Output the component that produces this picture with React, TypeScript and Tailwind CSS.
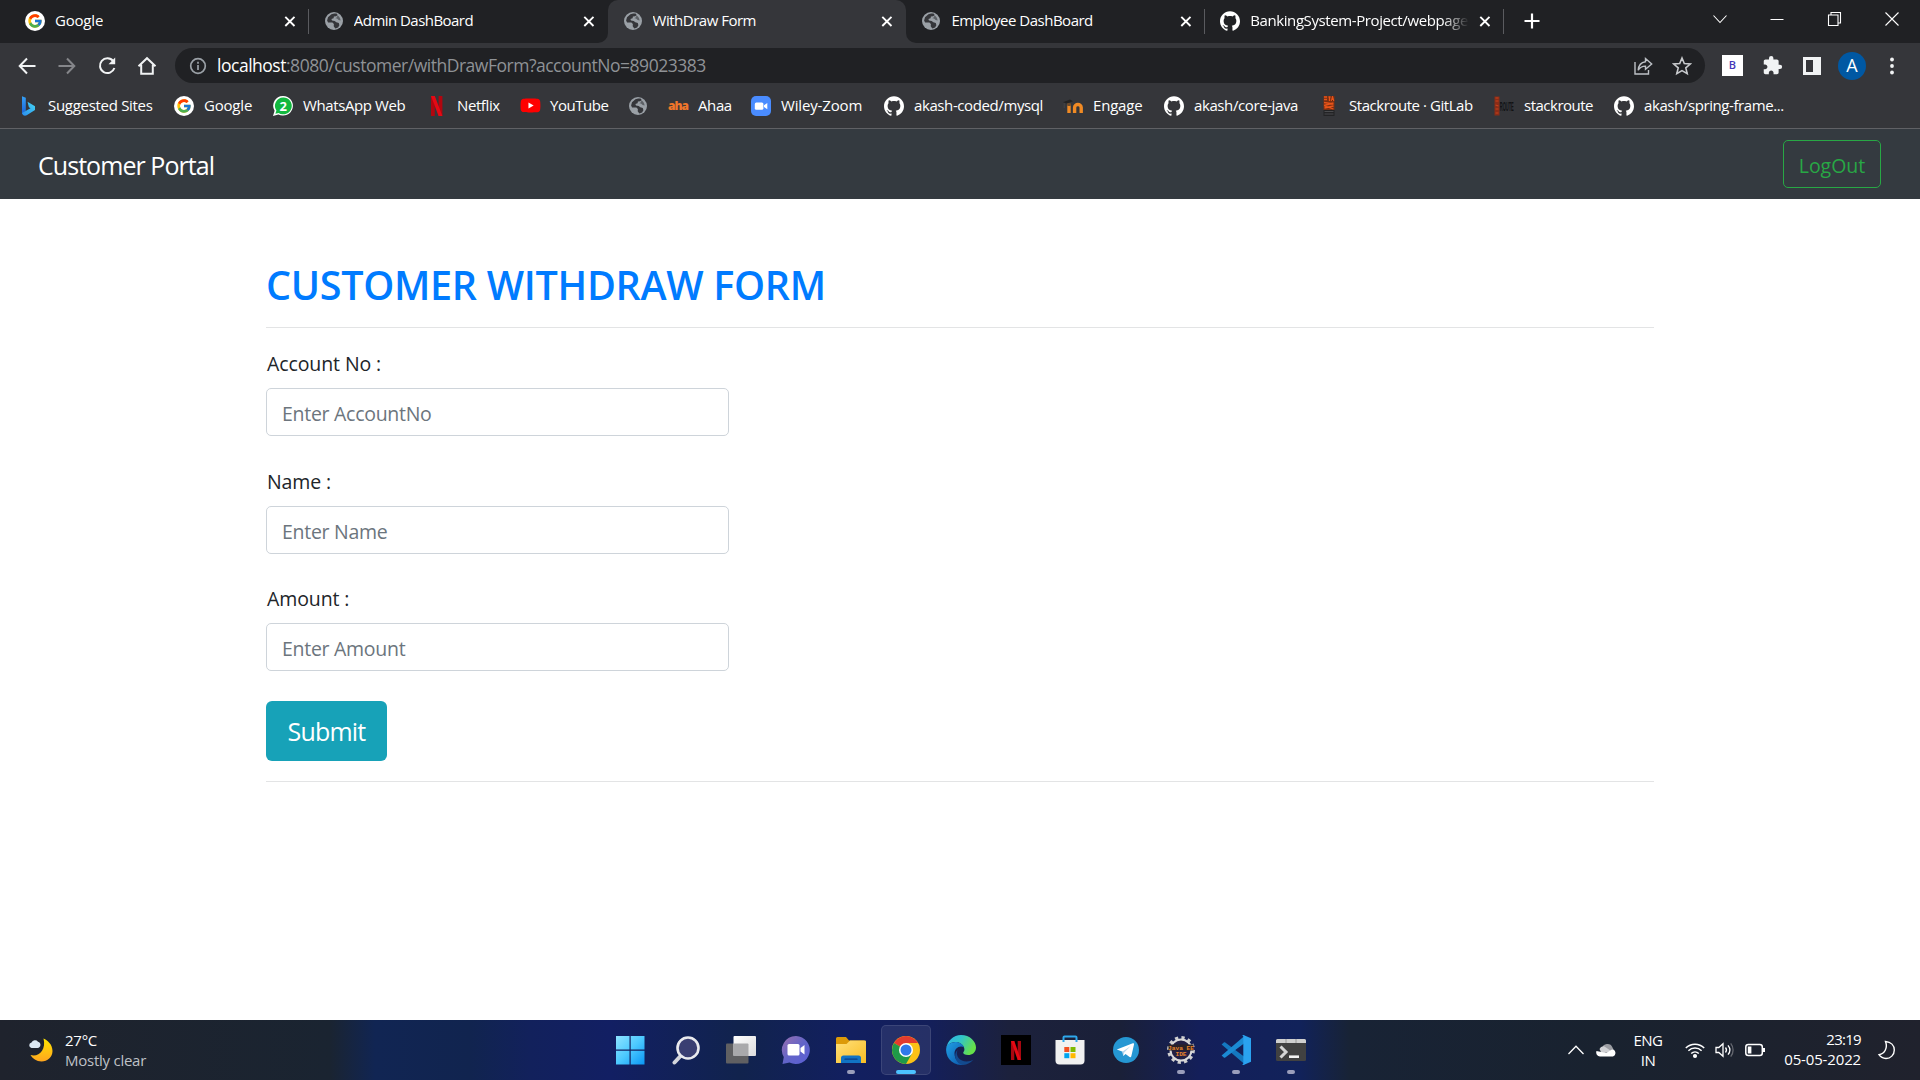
import type { ReactNode } from 'react'
import { FcGoogle } from 'react-icons/fc'
import { SiGithub } from 'react-icons/si'
import { MdExtension } from 'react-icons/md'
import { FaYoutube } from 'react-icons/fa'

function Globe() {
  return (
    <svg viewBox="0 0 20 20" className="size-5 shrink-0">
      <circle cx="10" cy="10" r="9" fill="#9aa0a6" />
      <path d="M10.2 2.6 7.4 3.2 4 6.3l-.9 3.2 1 1.9 4.3.2 1.5 1.3-.2 2.4 1.6 2.1 2.8-.9 1.3-2.2-.6-2.2-2.5-.8-1.6-1.4-2.7-.3-.6-1.5 2.2-.9.3-1.6 2.3-.4 1.5-1.3-1.2-1.5z" fill="#35363a" />
      <path d="M13 4.2c2 .9 3.4 2.8 3.6 5.200l-1.900-.3-1.700-1.500-1.700-.4 1.900-1.200z" fill="#5c6065" />
    </svg>
  )
}

function Google() {
  return (
    <span className="flex size-5 shrink-0 items-center justify-center rounded-full bg-white">
      <FcGoogle className="size-4" />
    </span>
  )
}

function Github() {
  return <SiGithub className="size-5 shrink-0 text-white" />
}

function Bing() {
  return (
    <svg viewBox="0 0 20 20" className="size-5 shrink-0">
      <defs>
        <linearGradient id="bingA" x1="0" y1="0" x2="0" y2="1">
          <stop offset="0" stopColor="#35a0f5" />
          <stop offset="1" stopColor="#1b63d8" />
        </linearGradient>
        <linearGradient id="bingB" x1="0" y1="1" x2="1" y2="0">
          <stop offset="0" stopColor="#2a8cf0" />
          <stop offset="1" stopColor="#45d6f2" />
        </linearGradient>
      </defs>
      <path d="M4 .3 7.800 1.800V15L4 18z" fill="url(#bingA)" />
      <path d="M9.500 5.800 17 10.200v3.800l-8.300 5.300c-2.200 1-4.400-.1-4.700-2.300l8.500-4.800-1.600-1z" fill="url(#bingB)" />
    </svg>
  )
}

function Whatsapp() {
  return (
    <svg viewBox="0 0 20 20" className="size-5 shrink-0">
      <path d="M10.200 0a9.800 9.800 0 1 1-4.800 18.400L0 20l1.600-5.200A9.800 9.800 0 0 1 10.200 0z" fill="#fff" />
      <path d="M10.200 1.500a8.400 8.400 0 1 1-4.500 15.400L2.400 17.800l1-3.200A8.400 8.400 0 0 1 10.200 1.500z" fill="#12b83f" />
      <text x="10.200" y="14.700" fontSize="13" fontWeight="700" fill="#fff" textAnchor="middle" fontFamily="Open Sans, sans-serif">2</text>
    </svg>
  )
}

function NetflixMark() {
  return (
    <svg viewBox="0 0 20 20" className="size-5 shrink-0">
      <path d="M4 0h3.800v20H4zM11.600 0h3.800v20h-3.800z" fill="#b1060f" />
      <path d="M4 0h3.800l7.600 20h-3.800z" fill="#e50914" />
    </svg>
  )
}

function Youtube() {
  return (
    <span className="flex size-5 shrink-0 items-center justify-center bg-[linear-gradient(#fff,#fff)] bg-[length:7px_7px] bg-center bg-no-repeat">
      <FaYoutube className="size-[21px] shrink-0 text-[#ff0000]" />
    </span>
  )
}

function Zoom() {
  return (
    <svg viewBox="0 0 20 20" className="size-5 shrink-0">
      <rect width="20" height="20" rx="5" fill="#4a8cff" />
      <rect x="3.800" y="6.500" width="8.600" height="7.200" rx="1.500" fill="#fff" />
      <path d="M13 9.200 16.300 7v6.200L13 11z" fill="#fff" />
    </svg>
  )
}

function Moodle() {
  return (
    <svg viewBox="0 0 20 20" className="size-5 shrink-0">
      <path d="M0 6.200 7 3.600 10 5.200 4 7.400z" fill="#222" />
      <path d="M1.200 7v5" stroke="#444" strokeWidth="1" />
      <path d="M6 17V8.500M11.600 17v-5.500c0-4 6.600-4 6.600 0V17" stroke="#f08a24" strokeWidth="3.400" fill="none" />
      <path d="M6 10V7" stroke="#6b4a2c" strokeWidth="3.400" />
    </svg>
  )
}

function StackA() {
  return (
    <svg viewBox="0 0 20 20" className="size-5 shrink-0">
      <rect x="4.500" y="0" width="11" height="14" fill="#7a2f12" />
      <path d="M5 1h3M5 3.500h3M9.500 1h2M10.500 1v4M12.500 5l1-4 1.200 4M5 6.500 14.500 8M5 9.500 14.500 7M5.500 12l9-2M5.500 10l9 3" stroke="#e8541a" strokeWidth="1.300" />
      <rect x="4.500" y="14" width="11" height="6" fill="#232325" />
      <path d="M5.500 15.500h9M5.500 18h9" stroke="#4a4b4e" strokeWidth="1" />
    </svg>
  )
}

function StackB() {
  return (
    <svg viewBox="0 0 20 20" className="size-5 shrink-0">
      <rect x="0.500" y="0.500" width="5" height="19" fill="#8a2c17" />
      <path d="M1.500 2h3M1.500 5h3M1.500 9l3 1M1.500 13h3M1.500 17h3" stroke="#c8421c" strokeWidth="1.200" />
      <text x="5.800" y="5" transform="scale(1 3)" fontSize="4" fontWeight="700" fill="#111214" fontFamily="Liberation Sans, sans-serif">ROUTE</text>
    </svg>
  )
}

function Close() {
  return (
    <svg viewBox="0 0 16 16" className="ml-auto size-4 shrink-0" stroke="#fff" strokeWidth="1.900">
      <path d="M3.300 3.800l9.200 9.200M12.500 3.800 3.300 13" />
    </svg>
  )
}

const tabs: { title: string; icon: ReactNode; track: string; active?: boolean; divider?: boolean; fade?: boolean }[] = [
  { title: 'Google', icon: <Google />, track: 'tracking-[-0.2px]', divider: true },
  { title: 'Admin DashBoard', icon: <Globe />, track: 'tracking-[-0.54px]' },
  { title: 'WithDraw Form', icon: <Globe />, track: 'tracking-[-0.5px]', active: true },
  { title: 'Employee DashBoard', icon: <Globe />, track: 'tracking-[-0.5px]', divider: true },
  { title: 'BankingSystem-Project/webpage', icon: <Github />, track: 'tracking-[-0.4px]', divider: true, fade: true },
]

const bookmarks: { label: string; icon: ReactNode; box: string; track: string }[] = [
  { label: 'Suggested Sites', icon: <Bing />, box: 'w-[156px]', track: 'tracking-[-0.3px]' },
  { label: 'Google', icon: <Google />, box: 'w-[99px]', track: 'tracking-[-0.2px]' },
  { label: 'WhatsApp Web', icon: <Whatsapp />, box: 'w-[154px]', track: 'tracking-[-0.4px]' },
  { label: 'Netflix', icon: <NetflixMark />, box: 'w-[93px]', track: 'tracking-[-0.4px]' },
  { label: 'YouTube', icon: <Youtube />, box: 'w-[108px]', track: 'tracking-[-0.45px]' },
  { label: '', icon: <Globe />, box: 'w-[40px]', track: '' },
  {
    label: 'Ahaa',
    icon: <span className="w-5 shrink-0 text-[12px] leading-5 font-extrabold tracking-[-1px] text-[#f0762b]">aha</span>,
    box: 'w-[83px]',
    track: 'tracking-[-0.4px]',
  },
  { label: 'Wiley-Zoom', icon: <Zoom />, box: 'w-[133px]', track: 'tracking-[-0.15px]' },
  { label: 'akash-coded/mysql', icon: <Github />, box: 'w-[179px]', track: 'tracking-[-0.4px]' },
  { label: 'Engage', icon: <Moodle />, box: 'w-[101px]', track: 'tracking-[-0.2px]' },
  { label: 'akash/core-java', icon: <Github />, box: 'w-[155px]', track: 'tracking-[-0.4px]' },
  { label: 'Stackroute · GitLab', icon: <StackA />, box: 'w-[175px]', track: 'tracking-[-0.45px]' },
  { label: 'stackroute', icon: <StackB />, box: 'w-[120px]', track: 'tracking-[-0.5px]' },
  { label: 'akash/spring-frame...', icon: <Github />, box: 'w-[175px]', track: 'tracking-[-0.41px]' },
]

function TabStrip() {
  return (
    <div className="flex h-[43px] bg-[#202124] pl-[10px] text-white">
      {tabs.map((t) => (
        <div
          key={t.title}
          className={`relative flex h-full w-[298.800px] items-center pr-[11px] pb-[1px] pl-[15px] ${t.active ? 'rounded-t-[10px] bg-[#35363a]' : ''}`}
        >
          {t.icon}
          <span
            className={`ml-[10px] overflow-hidden pb-[2px] text-[15px] leading-5 whitespace-nowrap ${t.track} ${t.fade ? 'w-[219px] [mask-image:linear-gradient(to_right,#000_88%,transparent)]' : ''}`}
          >
            {t.title}
          </span>
          <Close />
          {t.divider && <span className="absolute top-[9px] right-0 h-[25px] w-px bg-[#5a5b5f]" />}
          {t.active && (
            <>
              <span className="absolute bottom-0 -left-[10px] size-[10px] bg-[#35363a]">
                <span className="block size-full rounded-br-[10px] bg-[#202124]" />
              </span>
              <span className="absolute -right-[10px] bottom-0 size-[10px] bg-[#35363a]">
                <span className="block size-full rounded-bl-[10px] bg-[#202124]" />
              </span>
            </>
          )}
        </div>
      ))}
      <svg viewBox="0 0 16 16" className="mt-[13px] ml-[20px] size-4" stroke="#fff" strokeWidth="2.200">
        <path d="M8 .5v15M.5 8h15" />
      </svg>
      <div className="mr-[20px] ml-auto flex h-[38px] items-center gap-[41.500px]">
        <svg viewBox="0 0 16 16" className="size-4" fill="none" stroke="#fff" strokeWidth="1.100">
          <path d="M1.500 4.500 8 11.500l6.500-7" />
        </svg>
        <svg viewBox="0 0 16 16" className="size-4" stroke="#fff" strokeWidth="1">
          <path d="M1.500 8.500h13" />
        </svg>
        <svg viewBox="0 0 16 16" className="size-4" fill="none" stroke="#fff" strokeWidth="1.100">
          <path d="M1.500 4h9.500v10.500H1.500zM4 4V1.500h9.500V12H11" />
        </svg>
        <svg viewBox="0 0 16 16" className="size-4" stroke="#fff" strokeWidth="1.100">
          <path d="M1.500 1.500l13 13M14.500 1.500l-13 13" />
        </svg>
      </div>
    </div>
  )
}

function Toolbar() {
  return (
    <div className="flex h-[45px] items-center bg-[#35363a] pl-[17px]">
      <div className="flex items-center gap-5">
        <svg viewBox="0 0 20 20" className="size-5" fill="none" stroke="#f1f3f4" strokeWidth="2">
          <path d="M18.500 10H3M10 2.500 2.700 10l7.300 7.500" />
        </svg>
        <svg viewBox="0 0 20 20" className="size-5" fill="none" stroke="#85868a" strokeWidth="2">
          <path d="M1.500 10H17M10 2.500l7.300 7.500-7.300 7.500" />
        </svg>
        <svg viewBox="0 0 20 20" className="size-5" fill="none" stroke="#f1f3f4" strokeWidth="2">
          <path d="M16.200 5.100A7.400 7.400 0 1 0 17.400 12" />
          <path d="M18.200 1.500v6.700h-6.700z" fill="#f1f3f4" stroke="none" />
        </svg>
        <svg viewBox="0 0 20 20" className="size-5" fill="none" stroke="#f1f3f4" strokeWidth="2">
          <path d="M1.500 10.200 10 2.200l8.500 8M4.200 8.800v9h11.600v-9" />
        </svg>
      </div>
      <div className="ml-[18px] flex h-[35px] w-[1530px] items-center rounded-full bg-[#202124] pr-[13px] pl-[14px]">
        <svg viewBox="0 0 18 18" className="size-[18px]" fill="none" stroke="#9aa0a6" strokeWidth="1.700">
          <circle cx="9" cy="9" r="7.300" />
          <path d="M9 8v5M9 4.800v1.900" />
        </svg>
        <span className="ml-[10px] pb-px text-[17.500px] leading-6 tracking-[-0.48px] text-[#8f9296]">
          <span className="text-white">localhost</span>:8080/customer/withDrawForm?accountNo=89023383
        </span>
        <svg viewBox="0 0 20 20" className="ml-auto size-5" fill="none" stroke="#bdc1c6" strokeWidth="1.400">
          <path d="M2 6v12h13.500v-4" />
          <path d="M12.500 2.500 18.700 8l-6.200 5.300v-3.200c-3.500 0-5.700 1-7.300 4.200.3-4.700 2.600-8 7.300-8.600z" />
        </svg>
        <svg viewBox="0 0 20 20" className="ml-[19px] size-5" fill="none" stroke="#c8cacd" strokeWidth="1.600">
          <path d="m10 2 2.300 5.500 6 .5-4.500 3.900 1.400 5.800L10 14.600l-5.200 3.100 1.400-5.800L1.700 8l6-.5z" />
        </svg>
      </div>
      <span className="ml-[17px] flex size-[21px] items-center justify-center bg-white text-[11px] font-semibold text-[#4338b8]">B</span>
      <MdExtension className="ml-[19px] size-[21px] text-[#f1f3f4]" />
      <svg viewBox="0 0 20 20" className="ml-[19px] size-5">
        <path d="M1 1h18v18H1zM4 4v12h7V4z" fill="#f1f3f4" fillRule="evenodd" />
      </svg>
      <span className="ml-[16px] flex size-[28px] items-center justify-center rounded-full bg-[#0058a3] text-[18px] text-white">A</span>
      <svg viewBox="0 0 20 20" className="ml-[16px] size-5" fill="#f1f3f4">
        <circle cx="10" cy="3.500" r="1.900" />
        <circle cx="10" cy="10" r="1.900" />
        <circle cx="10" cy="16.500" r="1.900" />
      </svg>
    </div>
  )
}

function Field({ label, hint, gap }: { label: string; hint: string; gap: string }) {
  return (
    <div className={gap}>
      <label className="block pl-px text-[19.500px] leading-[30px] tracking-[-0.1px] text-[#212529]">{label}</label>
      <input
        placeholder={hint}
        className="mt-[9px] block h-[48px] w-[463px] rounded-[5px] border border-[#ced4da] px-[15px] pt-[2px] pb-0 text-[19.500px] tracking-[-0.28px] placeholder:text-[#6c757d]"
      />
    </div>
  )
}

function TaskIcon({ children, running }: { children: ReactNode; running?: boolean }) {
  return (
    <div className="relative flex h-[60px] w-[55px] items-center justify-center">
      {children}
      {running && <span className="absolute bottom-[6px] left-1/2 h-1 w-2 -translate-x-1/2 rounded-full bg-[#9a9ebb]" />}
    </div>
  )
}

function Taskbar() {
  return (
    <footer className="flex h-[60px] items-center bg-[linear-gradient(90deg,#1f232d_0px,#1a2431_330px,#112553_375px,#11244f_470px,#12215c_530px,#121f63_610px,#11234d_740px,#121f60_850px,#141f5a_930px,#1c213c_1010px,#1a2038_1120px,#141f5a_1200px,#11225a_1300px,#182335_1350px,#19222f_1600px,#20222d_1920px)] text-[15px] text-white">
      <div className="flex w-[588px] items-center pl-[26px]">
        <svg viewBox="0 0 30 30" className="size-[30px]">
          <defs>
            <linearGradient id="moon" x1="0" y1="0" x2="0" y2="1">
              <stop offset="0" stopColor="#ffe600" />
              <stop offset="1" stopColor="#ffa51f" />
            </linearGradient>
          </defs>
          <path d="M17.500 3.500c4 1.500 9 6 9 12.500 0 6-5 10.500-11 10.500-5 0-9-3-11-6.500 8 2.500 16-5 13-16.500z" fill="url(#moon)" />
          <path d="M5.500 13a2.800 2.800 0 0 1 0-5.500 3.800 3.800 0 0 1 6.500-.8A3.200 3.200 0 0 1 11.500 13z" fill="#dce8f3" />
        </svg>
        <div className="ml-[9px] leading-5 tracking-[-0.25px]">
          <div>27°C</div>
          <div className="text-[#bfc1c6]">Mostly clear</div>
        </div>
      </div>
      <div className="flex pl-[15px]">
        <TaskIcon>
          <svg viewBox="0 0 30 30" className="mr-[2px] size-[30px]">
            <defs>
              <linearGradient id="win" x1="0" y1="0" x2="1" y2="1">
                <stop offset="0" stopColor="#8fe3ff" />
                <stop offset=".5" stopColor="#4cc9ff" />
                <stop offset="1" stopColor="#0a96f5" />
              </linearGradient>
            </defs>
            <path d="M1 1h13.500v13.500H1zM15.700 1h13.800v13.500H15.700zM1 15.700h13.500v13.800H1zM15.700 15.700h13.800v13.800H15.700z" fill="url(#win)" />
          </svg>
        </TaskIcon>
        <TaskIcon>
          <svg viewBox="0 0 30 30" className="size-[30px]">
            <path d="M3.500 27.500 10 20.500" stroke="#d3d5dc" strokeWidth="4" strokeLinecap="round" />
            <circle cx="17" cy="13" r="10.500" fill="#3a3f72" stroke="#e9eaee" strokeWidth="2.600" />
          </svg>
        </TaskIcon>
        <TaskIcon>
          <svg viewBox="0 0 30 30" className="size-[30px]">
            <defs>
              <linearGradient id="tv" x1="0" y1="0" x2="1" y2="1">
                <stop offset="0" stopColor="#fff" />
                <stop offset="1" stopColor="#dcdcdc" />
              </linearGradient>
            </defs>
            <rect y="8.500" width="22.500" height="20" rx="1" fill="#606062" />
            <rect x="7.500" y="1" width="22.500" height="20" rx="1" fill="url(#tv)" />
            <path d="M7.500 8.500h14a1 1 0 0 1 1 1V21H7.500z" fill="#a9a9ab" />
          </svg>
        </TaskIcon>
        <TaskIcon>
          <svg viewBox="0 0 30 30" className="size-[30px]">
            <defs>
              <linearGradient id="chat" x1="0" y1="0" x2="1" y2="1">
                <stop offset="0" stopColor="#9a6fae" />
                <stop offset=".5" stopColor="#6264c8" />
                <stop offset="1" stopColor="#5a5fd6" />
              </linearGradient>
            </defs>
            <path d="M15 1a14 14 0 1 1-6.500 26.500L1.500 29l1.300-7A14 14 0 0 1 15 1z" fill="url(#chat)" />
            <rect x="6.500" y="9" width="12" height="11.500" rx="1.500" fill="#fff" />
            <path d="m19.500 13 4-3v9.500l-4-3z" fill="#fff" />
          </svg>
        </TaskIcon>
        <TaskIcon running>
          <svg viewBox="0 0 30 30" className="size-[30px]">
            <defs>
              <linearGradient id="fold" x1="0" y1="0" x2="1" y2="1">
                <stop offset="0" stopColor="#ffe07a" />
                <stop offset="1" stopColor="#f9bd23" />
              </linearGradient>
            </defs>
            <path d="M0 3.500a1.500 1.500 0 0 1 1.500-1.500H10l3 3.500H28.500V12H0z" fill="#dc9a08" />
            <path d="M0 9h10.500L14 5.500h15a1 1 0 0 1 1 1V28H0z" fill="url(#fold)" />
            <path d="M5 28v-5a2.500 2.500 0 0 1 2.500-2.500h15A2.500 2.500 0 0 1 25 23v5z" fill="#1173c4" />
            <path d="M9 24.200h12" stroke="#0b3f86" strokeWidth="1.300" strokeLinecap="round" />
          </svg>
        </TaskIcon>
        <TaskIcon>
          <span className="absolute top-[5px] left-[3px] h-[50px] w-[50px] rounded-[5px] border border-white/10 bg-white/8" />
          <svg viewBox="0 0 30 30" className="relative size-[30px]">
            <circle cx="15" cy="15" r="14" fill="#fbc116" />
            <path d="M2.900 8A14 14 0 0 1 27.100 8H15v7z" fill="#e33b2e" />
            <path d="M2.900 8A14 14 0 0 0 15 29l6-10.500L15 15z" fill="#1f9a49" />
            <circle cx="15" cy="15" r="7" fill="#fff" />
            <circle cx="15" cy="15" r="5.500" fill="#2f79ea" />
          </svg>
          <span className="absolute bottom-[6px] left-[18px] h-1 w-5 rounded-full bg-[#4cc2ff]" />
        </TaskIcon>
        <TaskIcon>
          <svg viewBox="0 0 30 30" className="size-[30px]">
            <defs>
              <linearGradient id="edA" x1="0" y1="0" x2="1" y2=".4">
                <stop offset="0" stopColor="#2fb3ea" />
                <stop offset=".5" stopColor="#32c5c8" />
                <stop offset="1" stopColor="#66e04a" />
              </linearGradient>
              <linearGradient id="edB" x1="0" y1="0" x2="1" y2="1">
                <stop offset="0" stopColor="#1fa0e6" />
                <stop offset="1" stopColor="#0d55a8" />
              </linearGradient>
            </defs>
            <path d="M.3 13.500A15 15 0 0 1 15 0c9 0 15 6.500 15 12.500 0 5-4 7.500-7.800 7.500-3.500 0-5-1.200-5-2.200 0-.8 1.200-1.200 1.200-3.500C18.400 10.500 14 7 9.500 7 5 7 1.500 9.500.3 13.500z" fill="url(#edA)" />
            <path d="M.1 15C0 10 5 7 9.500 7c4 0 7.500 2.300 8.500 5.200-5-2-9.500 1.300-9.500 6.500 0 5 4 10 9.500 11A15 15 0 0 1 .1 15z" fill="url(#edB)" />
            <path d="M11.500 15c-2.500 6 2.500 11.500 9 11.500 3 0 5.300-1 7-2A15 15 0 0 1 17 29.900C10 29 6.500 20 11.500 15z" fill="#134a8e" />
          </svg>
        </TaskIcon>
        <TaskIcon>
          <span className="flex size-[30px] items-center justify-center bg-black">
            <svg viewBox="0 0 10 19" className="h-[19px] w-[10px]">
              <path d="M0 0h3.300v19H0zM6.700 0H10v19H6.700z" fill="#a80710" />
              <path d="M0 0h3.300L10 19H6.700z" fill="#e50914" />
            </svg>
          </span>
        </TaskIcon>
        <TaskIcon>
          <svg viewBox="0 0 30 30" className="mr-px size-[30px]">
            <path d="M8.500 8V2.500a1 1 0 0 1 1-1h11a1 1 0 0 1 1 1V8" stroke="#2ea8ec" strokeWidth="2" fill="none" />
            <path d="M.5 5h29v20.500a4 4 0 0 1-4 4h-21a4 4 0 0 1-4-4z" fill="#f1f1f1" />
            <path d="M8.500 5v2M21.500 5v2" stroke="#2ea8ec" strokeWidth="2" />
            <path d="M9.300 12h5v5h-5z" fill="#f25022" />
            <path d="M15.500 12h5v5h-5z" fill="#7fba00" />
            <path d="M9.300 18.200h5v5h-5z" fill="#00a4ef" />
            <path d="M15.500 18.200h5v5h-5z" fill="#ffb900" />
          </svg>
        </TaskIcon>
        <TaskIcon>
          <svg viewBox="0 0 30 30" className="size-[30px]">
            <circle cx="15" cy="15" r="13" fill="#2597d3" />
            <path d="M5.800 14.600 21.800 8.300c.8-.3 1.400.2 1.200 1.200l-2.700 11.700c-.2 1-.9 1.200-1.700.7l-4-2.900-2.300 2-.6-4.300z" fill="#fff" />
            <path d="m11.200 16.700 8.500-5.800-6.500 6.700-.9 3.400z" fill="#b6d8ee" />
          </svg>
        </TaskIcon>
        <TaskIcon running>
          <svg viewBox="0 0 30 30" className="size-[30px]">
            <circle cx="15" cy="15" r="12.400" fill="none" stroke="#cfcfcf" strokeWidth="3" strokeDasharray="3.250 3.250" />
            <circle cx="15" cy="15" r="10.500" fill="#232044" stroke="#dadada" strokeWidth="2" />
            <rect x="2.500" y="9.500" width="25" height="6" fill="#2b2226" />
            <text x="15" y="14.800" fontSize="6.200" fontWeight="700" textAnchor="middle" fill="#e8842c" fontFamily="Liberation Mono, monospace">Java EE</text>
            <text x="15" y="21" fontSize="6.200" fontWeight="700" textAnchor="middle" fill="#e8842c" fontFamily="Liberation Mono, monospace">IDE</text>
          </svg>
        </TaskIcon>
        <TaskIcon running>
          <svg viewBox="0 0 30 30" className="size-[30px]">
            <path d="M.6 9.500 2.800 7.500c.5-.4 1-.4 1.500 0L24 22.200V29.500z" fill="#1478c0" />
            <path d="M.6 20.500l2.200 2c.5.400 1 .4 1.500 0L24 7.800V.5z" fill="#1b8ad3" />
            <path d="M22.500 0 30 3.300v23.400L22.500 30c-.6.200-1 0-1.200-.3l1-1V1.300l-1-1c.2-.3.600-.4 1.200-.3z" fill="#2aa2f0" />
          </svg>
        </TaskIcon>
        <TaskIcon running>
          <svg viewBox="0 0 30 30" className="size-[30px]">
            <rect y="4" width="30" height="22" rx="1.500" fill="#414141" />
            <path d="M0 8V5.500A1.500 1.500 0 0 1 1.500 4h27A1.500 1.500 0 0 1 30 5.500V8z" fill="#cfcfcf" />
            <path d="M10 4v4M20 4v4" stroke="#8b8b8b" strokeWidth=".8" />
            <path d="m4.500 11.500 5.500 5.500-5.500 5.500" stroke="#d6d6d6" strokeWidth="3" fill="none" />
            <path d="M13 21.700h10" stroke="#f2f2f2" strokeWidth="2.600" />
          </svg>
        </TaskIcon>
      </div>
      <div className="ml-auto flex items-center pr-[23px]">
        <svg viewBox="0 0 18 18" className="size-[18px]" fill="none" stroke="#fff" strokeWidth="1.300">
          <path d="M1.500 13 9 5.200l7.500 7.800" />
        </svg>
        <svg viewBox="0 0 20 20" className="ml-[11px] size-5">
          <path d="M6 8.500a5.500 5.500 0 0 1 10.500-1l2 4-8 1z" fill="#9b9da2" />
          <path d="M3.500 9a4.500 4.500 0 0 1 5-2.500L15 11l-9 3z" fill="#d0d1d4" />
          <path d="M4 16.500a4 4 0 0 1-3.500-5.500L10 13l6-3.500a3.600 3.600 0 0 1 1 7z" fill="#fff" />
        </svg>
        <div className="mb-px ml-[17px] w-[30px] text-center leading-5 tracking-[-0.5px] whitespace-nowrap">
          <div>ENG</div>
          <div>IN</div>
        </div>
        <svg viewBox="0 0 20 20" className="ml-[22px] size-5" fill="none" stroke="#fff" strokeWidth="1.500">
          <path d="M.8 8a13 13 0 0 1 18.400 0M3.400 10.800a9.400 9.400 0 0 1 13.200 0M6.200 13.500a5.600 5.600 0 0 1 7.600 0" />
          <circle cx="10" cy="16" r="1.300" fill="#fff" />
        </svg>
        <svg viewBox="0 0 20 20" className="ml-[10px] size-5" fill="none" stroke="#fff" strokeWidth="1.300">
          <path d="M1 7.500h2.800L8 3.800v12.400l-4.200-3.700H1z" />
          <path d="M10.500 7.500c1.200 1.500 1.200 3.500 0 5M13 5.300c2.300 2.800 2.300 6.600 0 9.400" />
          <path d="M15.700 3.300c3.200 4 3.200 9.400 0 13.400" stroke="#64676f" />
        </svg>
        <svg viewBox="0 0 20 20" className="ml-[10px] size-5" fill="none" stroke="#fff" strokeWidth="1.500">
          <rect x=".8" y="4.500" width="16.500" height="11" rx="2.500" />
          <rect x="2.800" y="6.500" width="3.600" height="7" fill="#fff" stroke="none" />
          <path d="M19 8v4" strokeWidth="2" />
        </svg>
        <div className="mb-[2px] ml-[18px] w-[78px] text-right leading-5 tracking-[-0.15px] whitespace-nowrap">
          <div className="tracking-[-0.7px]">23:19</div>
          <div>05-05-2022</div>
        </div>
        <svg viewBox="0 0 20 20" className="ml-[16px] size-5" fill="none" stroke="#fff" strokeWidth="1.400">
          <path d="M8.500 1.500C14 2 17.300 5.500 17.300 10c0 5-3.800 8.500-8.300 8.500-3 0-5.500-1.500-7-3.800C7.500 14 11 8 8.500 1.500z" />
        </svg>
      </div>
    </footer>
  )
}

export default function App() {
  return (
    <div className="flex h-[1080px] w-[1920px] flex-col overflow-hidden bg-white font-['Open_Sans',sans-serif]">
      <TabStrip />
      <Toolbar />
      <nav className="flex h-[41px] items-center border-b border-[#606165] bg-[#35363a] pb-[5px] pl-[18px] text-[15px] text-white">
        {bookmarks.map((b, i) => (
          <div key={i} className={`flex shrink-0 items-center gap-[10px] ${b.box}`}>
            {b.icon}
            <span className={`pb-[2px] leading-5 whitespace-nowrap ${b.track}`}>{b.label}</span>
          </div>
        ))}
      </nav>
      <header className="flex h-[70px] items-center justify-between bg-[#343a40] pr-[39px] pl-[38px]">
        <span className="pt-[2px] text-[25px] leading-[38px] tracking-[-0.95px] text-white">Customer Portal</span>
        <button className="h-[48px] w-[98px] rounded-[5px] border border-[#28a745] pt-[3px] text-[19.500px] text-[#28a745]">LogOut</button>
      </header>
      <main className="flex-1 px-[266px]">
        <h2 className="pt-[62px] text-[39.500px] leading-[48px] font-semibold tracking-[-0.3px] text-[#007bff]">CUSTOMER WITHDRAW FORM</h2>
        <hr className="mt-[18px] border-[#e3e4e5]" />
        <Field label="Account No :" hint="Enter AccountNo" gap="mt-[21px]" />
        <Field label="Name :" hint="Enter Name" gap="mt-[31px]" />
        <Field label="Amount :" hint="Enter Amount" gap="mt-[30px]" />
        <button className="mt-[30px] block h-[60px] w-[121px] rounded-[6px] bg-[#17a2b8] pt-[2px] text-[25px] tracking-[-0.8px] text-white">Submit</button>
        <hr className="mt-[20px] border-[#e3e4e5]" />
      </main>
      <Taskbar />
    </div>
  )
}
